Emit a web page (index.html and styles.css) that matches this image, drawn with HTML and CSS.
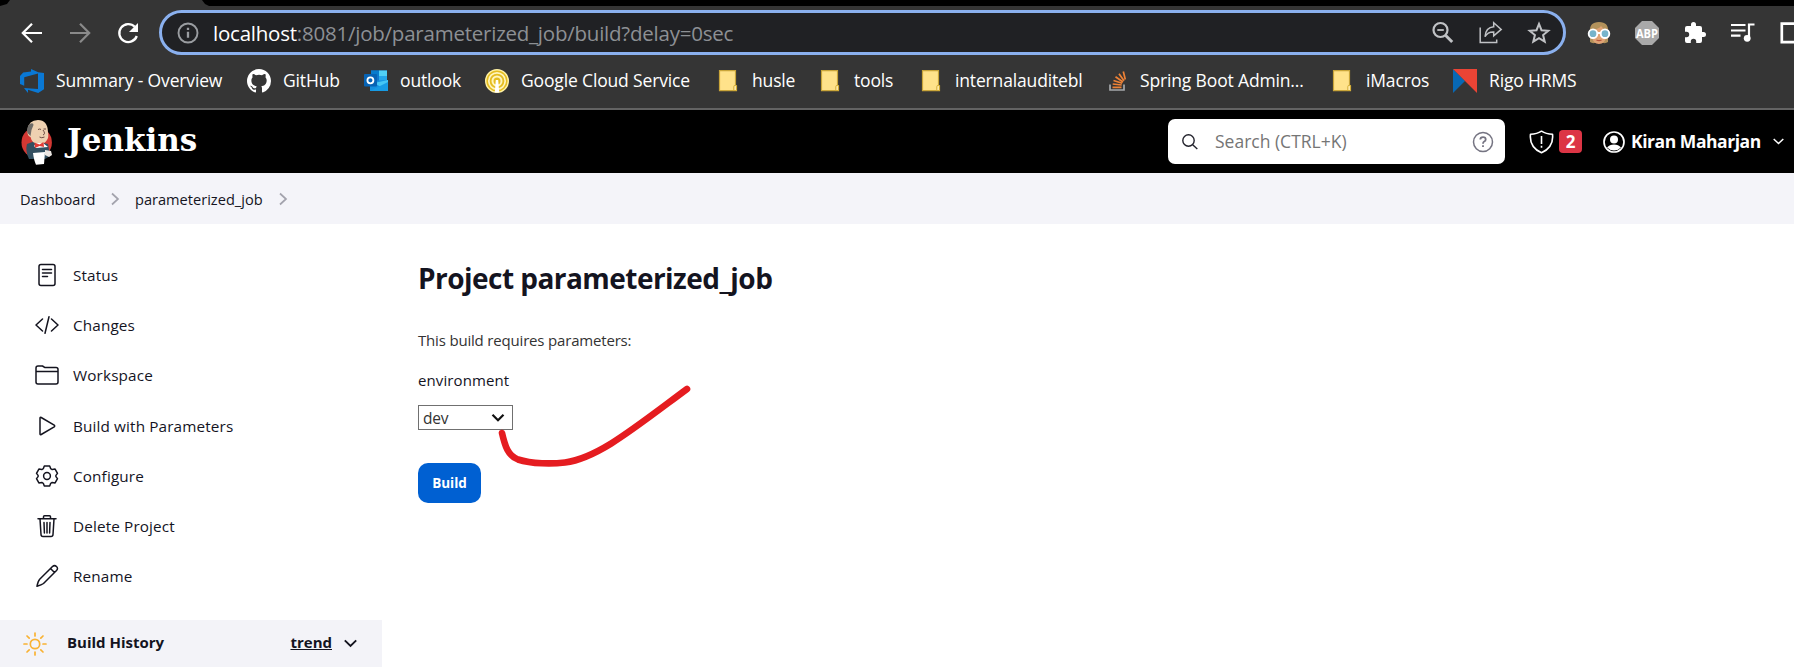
FILE: index.html
```
<!DOCTYPE html>
<html lang="en">
<head>
<meta charset="utf-8">
<title>parameterized_job [Jenkins]</title>
<link rel="stylesheet" href="styles.css">
</head>
<body>
<svg width="0" height="0" class="defs" aria-hidden="true">
  <symbol id="folder" viewBox="0 0 24 24"><path d="M3.500 1.700h16v14.500l1 .5v5h-17z" fill="#ffe28a" stroke="#c9a53a" stroke-width="1.200"/><path d="M17.800 21.500v-3.500q0-1.800 1.400-1.800 1.300 0 1.300 1.500v3.800z" fill="#ffe9a6" stroke="#d0a92f" stroke-width=".9"/></symbol>
  <symbol id="crumb" viewBox="0 0 10 14"><path d="M2 1.500L8 7l-6 5.500" fill="none" stroke="#a3a3ad" stroke-width="1.700"/></symbol>
</svg>

<div class="tabstrip"><div class="tab"></div></div>
<div class="toolbar">
  <div class="nav">
    <svg width="24" height="24" viewBox="0 0 24 24" fill="none" stroke="#fff" stroke-width="2.200"><path d="M22 12H3.500M12 2.700L2.800 12l9.200 9.300"/></svg>
    <svg width="24" height="24" viewBox="0 0 24 24" fill="none" stroke="#8a8a8a" stroke-width="2.200"><path d="M2 12h18.500M12 2.700l9.200 9.300L12 21.300"/></svg>
    <svg width="24" height="24" viewBox="0 0 24 24"><path d="M18.800 5.800A9 9 0 1 0 20.800 15" fill="none" stroke="#fff" stroke-width="2.300"/><path d="M22 2v9h-9z" fill="#fff"/></svg>
  </div>
  <div class="omnibox">
    <svg width="22" height="22" viewBox="0 0 22 22" fill="none" stroke="#9a9da1" stroke-width="1.900"><circle cx="11" cy="11" r="9.500"/><path d="M11 9.800v6M11 5.800v2.200" stroke-width="2.300"/></svg>
    <div class="url"><span class="host">localhost</span>:8081/job/parameterized_job/build?delay=0sec</div>
    <div class="omni-actions">
      <svg width="24" height="24" viewBox="0 0 24 24" fill="none" stroke="#c0c2c5"><circle cx="9.500" cy="9" r="7" stroke-width="2.200"/><path d="M6.300 9h6.500" stroke-width="1.800"/><path d="M14.700 14.500l6.500 6.500" stroke-width="3"/></svg>
      <svg width="24" height="24" viewBox="0 0 24 24" fill="none" stroke="#c0c2c5" stroke-width="1.500"><path d="M1.200 6.500v15h16.500v-3M14.700 1.700l7.500 6.700-7.500 6.400v-3.900c-4.500-.2-7 1.600-8.700 4.800.4-5.300 3-9.600 8.700-10z"/></svg>
      <svg width="24" height="24" viewBox="0 0 24 24" fill="none" stroke="#c0c2c5" stroke-width="2"><path d="M12 2.900l2.500 6.300 6.800.5-5.200 4.400 1.600 6.600-5.700-3.600-5.700 3.600 1.600-6.600-5.200-4.400 6.800-.5z"/></svg>
    </div>
  </div>
  <div class="extensions">
    <svg width="24" height="24" viewBox="0 0 24 24"><path d="M3 11Q2 1 12 1t9 10v10q-2 1.500-4.500 1h-9Q5 22.500 3 21z" fill="#b3925b"/><path d="M5 9q7-1 9-4 2 3 5 4v7q-1 7-7 7t-7-7z" fill="#e0a375"/><path d="M9.500 19q2.500 1.300 5 0" stroke="#b5543c" stroke-width="1.400" fill="none"/><g fill="#76b4cb" stroke="#fff" stroke-width="1.900"><circle cx="6" cy="12.700" r="4.300"/><circle cx="18" cy="12.700" r="4.300"/></g><path d="M10 12h4" stroke="#fff" stroke-width="2"/></svg>
    <svg width="24" height="24" viewBox="0 0 24 24"><path d="M7 0h10l7 7v10l-7 7H7l-7-7V7z" fill="#a9a9a9"/><text x="12" y="16.500" class="abp" textLength="22" lengthAdjust="spacingAndGlyphs">ABP</text></svg>
    <svg width="24" height="24" viewBox="0 0 24 24" fill="#fff"><path d="M20.500 11H19V7a2 2 0 0 0-2-2h-4V3.500a2.500 2.500 0 0 0-5 0V5H4a2 2 0 0 0-2 2v3.800h1.500a2.700 2.700 0 0 1 0 5.400H2V20a2 2 0 0 0 2 2h3.800v-1.500a2.700 2.700 0 0 1 5.400 0V22H17a2 2 0 0 0 2-2v-4h1.500a2.500 2.500 0 0 0 0-5z"/></svg>
    <svg width="24" height="24" viewBox="0 0 24 24" fill="none" stroke="#fff" stroke-width="2.200"><path d="M0 4h14.500M0 9.500h14.500M0 14.700h9.500M18 17V3.500h5.500" /><circle cx="16.200" cy="17.300" r="3.400" fill="#fff" stroke="none"/></svg>
    <svg width="24" height="24" viewBox="0 0 24 24" fill="none" stroke="#fff" stroke-width="2.700"><path d="M2.800 2.600h21v18.500h-21z"/></svg>
  </div>
</div>

<div class="bookmarks">
  <div class="bm"><svg width="24" height="24" viewBox="0 0 24 24"><path d="M24 4v16.200L18.200 24 8 20.700V24l-4-5 14 1V4.600L4.200 8.300v8.500L0 15V7l3.200-3.400L11 2.500V0l7.200 3.300z" fill="#0a78d4"/></svg><span>Summary - Overview</span></div>
  <div class="bm"><svg width="24" height="24" viewBox="0 0 16 16" fill="#fff"><path d="M8 0C3.580 0 0 3.580 0 8c0 3.540 2.290 6.530 5.470 7.590.4.070.55-.17.55-.38 0-.19-.01-.82-.01-1.490-2.010.37-2.530-.49-2.690-.94-.09-.23-.48-.94-.82-1.130-.28-.15-.68-.52-.01-.53.63-.01 1.080.58 1.230.82.72 1.210 1.870.87 2.330.66.070-.52.28-.87.51-1.070-1.780-.2-3.640-.89-3.640-3.950 0-.87.31-1.590.82-2.150-.08-.2-.36-1.020.08-2.120 0 0 .67-.21 2.200.82a7.600 7.600 0 0 1 4 0c1.530-1.040 2.200-.82 2.200-.82.44 1.100.16 1.920.08 2.120.51.56.82 1.270.82 2.150 0 3.070-1.870 3.750-3.650 3.950.29.25.54.73.54 1.480 0 1.070-.01 1.930-.01 2.200 0 .21.15.46.55.38A8 8 0 0 0 16 8c0-4.420-3.580-8-8-8z"/></svg><span>GitHub</span></div>
  <div class="bm"><svg width="24" height="24" viewBox="0 0 24 24"><path d="M7 1.500h16V14H7z" fill="#1177cc"/><path d="M15 1.500h8V7h-8z" fill="#50d0f5"/><path d="M7 1.500h8V7H7z" fill="#087bcc"/><path d="M15 7h8v6h-8z" fill="#24a6ea"/><path d="M6 12l18-1v11H6z" fill="#1490df"/><path d="M24 11v11L10 14z" fill="#45c6f4"/><path d="M6 22l18-9v9z" fill="#179be4"/><rect y="5" width="13" height="12.500" rx="1" fill="#0763b4"/><circle cx="6.400" cy="11.300" r="3" fill="none" stroke="#fff" stroke-width="1.800"/></svg><span>outlook</span></div>
  <div class="bm"><svg width="24" height="24" viewBox="0 0 24 24"><circle cx="12" cy="12" r="11.300" fill="#e5bd20" stroke="#fff1a4" stroke-width="1.400"/><g fill="none" stroke="#fff5bd"><circle cx="12" cy="12" r="8.200" stroke-width="1.700"/><circle cx="12" cy="12" r="4.500" stroke-width="2"/></g><path d="M10.800 11h2.400l1 12.500H9.800z" fill="#fff"/></svg><span>Google Cloud Service</span></div>
  <div class="bm"><svg width="24" height="24"><use href="#folder"/></svg><span>husle</span></div>
  <div class="bm"><svg width="24" height="24"><use href="#folder"/></svg><span>tools</span></div>
  <div class="bm"><svg width="24" height="24"><use href="#folder"/></svg><span>internalauditebl</span></div>
  <div class="bm"><svg width="24" height="24" viewBox="0 0 24 24" fill="none"><path d="M6 15.500v5.500h14v-5.500" stroke="#a5a8aa" stroke-width="1.700"/><path d="M8.500 18.300h9M8.700 15l9 1M9.500 11.500l8.700 2.800M11.500 7.800l7.500 5.200M15 4.700l5 7M19.300 2.500l2 8" stroke="#ee8236" stroke-width="1.700"/></svg><span>Spring Boot Admin...</span></div>
  <div class="bm"><svg width="24" height="24"><use href="#folder"/></svg><span>iMacros</span></div>
  <div class="bm"><svg width="24" height="24" viewBox="0 0 24 24"><path d="M0 0v24l12-12z" fill="#0868b4"/><path d="M0 0h24v24z" fill="#ea4435"/></svg><span>Rigo HRMS</span></div>
</div>

<header class="header">
  <div class="brand">
    <svg width="32" height="46" viewBox="0 0 32 46"><ellipse cx="15.700" cy="23.500" rx="15.200" ry="15.500" fill="#d33833"/><path d="M6 25l8-3 13 3 2 12-5 3H8Q4 32 6 25z" fill="#335061"/><path d="M6.500 11Q7.500 1 17 1t10 12q1 5-1 8-3 5-8.500 4Q11 25 9.500 18 6 17 6.500 11z" fill="#eed1b1"/><path d="M8.500 5Q5 9 6.500 14l3 3 1-6 2-5q0-3-4-1z" fill="#6f6c68"/><path d="M15 24l-2 3 2 2 12-1-5-4z" fill="#fff"/><path d="M13.500 23.500l5 2 4-2.500.5 5-4.500-1-4.500 2z" fill="#e33c35"/><path d="M12 34l12-1-1 12-8 .7q-2-4-3-11.700z" fill="#fff"/><path d="M24 31l6 1 1 4-3 2-4-2z" fill="#ebe6e2"/><path d="M18.500 18q2 1.500 5 0M17 10.500q2-1 3 0M22.500 10h2.500M22 11q3 4 0 5" fill="none" stroke="#6d4b42"/></svg>
    <span class="wordmark">Jenkins</span>
  </div>
  <div class="search">
    <svg width="16" height="16" viewBox="0 0 16 16" fill="none" stroke="#22222c" stroke-width="1.400"><circle cx="6.500" cy="6.500" r="5.700"/><path d="M10.700 10.700l4.600 4.400"/></svg>
    <span class="placeholder">Search (CTRL+K)</span>
    <svg width="22" height="22" viewBox="0 0 22 22" fill="none" stroke="#757482" stroke-width="1.500"><circle cx="11" cy="11" r="9.500"/><path d="M8.300 8.600q0-2.500 2.700-2.500t2.700 2.300q0 1.300-1.500 2.100-1.200.7-1.200 2.200M11 14.200v1.900" stroke-width="1.800"/></svg>
  </div>
  <div class="alerts">
    <svg width="25" height="24" viewBox="0 0 25 24" fill="none" stroke="#fff" stroke-width="1.600"><path d="M12.500 1.200Q8 4.200 1.500 4.200 0 17 12.500 22.800 25 17 23.500 4.200 17 4.200 12.500 1.200z" stroke-linejoin="round"/><path d="M12.500 6v8M12.500 15.700v2"/></svg>
    <span class="badge">2</span>
  </div>
  <div class="user">
    <svg width="22" height="22" viewBox="0 0 22 22"><circle cx="11" cy="11" r="10" fill="none" stroke="#fff" stroke-width="1.700"/><circle cx="11" cy="8.500" r="4" fill="#fff"/><path d="M4 16.500Q6.500 13.500 11 13.500t7 3Q15 19.500 11 19.500T4 16.500z" fill="#fff"/></svg>
    <span class="username">Kiran Maharjan</span>
    <svg width="11" height="7" viewBox="0 0 11 7" fill="none" stroke="#fff" stroke-width="1.500"><path d="M.7 1l4.800 4.500L10.300 1"/></svg>
  </div>
</header>

<nav class="breadcrumbs">
  <span class="crumb-home">Dashboard</span><svg width="10" height="14"><use href="#crumb"/></svg>
  <span class="crumb-job">parameterized_job</span><svg width="10" height="14"><use href="#crumb"/></svg>
</nav>

<div class="page">
  <aside class="side">
    <div class="tasks">
      <div class="task"><svg width="24" height="24" viewBox="0 0 24 24"><rect x="4" y="1.500" width="16" height="21" rx="2"/><path d="M7.500 6.500h9M7.500 10h9M7.500 13.500h5"/></svg><span>Status</span></div>
      <div class="task"><svg width="24" height="24" viewBox="0 0 24 24"><path d="M7.500 6L1 12l6.500 6M16.500 6l6.500 6-6.500 6M14 3.800L10 20.200"/></svg><span>Changes</span></div>
      <div class="task"><svg width="24" height="24" viewBox="0 0 24 24"><path d="M1 19V5q0-2 2-2h4.500l2.500 1.600h11q2 0 2 2V19q0 2-2 2H3q-2 0-2-2zM1 8.500h22"/></svg><span>Workspace</span></div>
      <div class="task"><svg width="24" height="24" viewBox="0 0 24 24"><path d="M5 4.200v15.600q0 1.400 1.200.7l13-7.700q1-.8 0-1.600l-13-7.700Q5 2.800 5 4.200z"/></svg><span>Build with Parameters</span></div>
      <div class="task"><svg width="24" height="24" viewBox="0 0 24 24"><path d="M9.300 2h5.400l1 2.700 1.500.9 2.900-.5 2.400 4.300-1.600 2v1.200l1.600 2-2.400 4.300-2.900-.5-1.500.9-1 2.700H9.300l-1-2.700-1.500-.9-2.900.5-2.400-4.300 1.600-2v-1.200l-1.600-2 2.400-4.300 2.900.5 1.500-.9z"/><circle cx="12" cy="12" r="3.400"/></svg><span>Configure</span></div>
      <div class="task"><svg width="24" height="24" viewBox="0 0 24 24"><path d="M3 4.800h18M8.500 4.500V2.800q0-1 1-1h5q1 0 1 1v1.700M5 5l1 15.500q.1 2 2 2h8q1.900 0 2-2L19 5M9 8.500l.4 10.500M12 8.500V19M15 8.500L14.600 19"/></svg><span>Delete Project</span></div>
      <div class="task"><svg width="24" height="24" viewBox="0 0 24 24"><path d="M17.500 2.500q2-1.800 4 0t0 4L8.500 19.500Q6.500 21 2 22.200 3 17 4.700 15.200zM15.500 4.500l4 4"/></svg><span>Rename</span></div>
    </div>
    <div class="history">
      <svg width="24" height="24" viewBox="0 0 24 24" fill="none" stroke="#f9b233" stroke-width="1.700" stroke-linecap="round"><circle cx="12" cy="12" r="4.700"/><path d="M12 1v3M12 20v3M1 12h3M20 12h3M4 4l2.200 2.200M17.800 17.800L20 20M4 20l2.200-2.200M17.800 6.200L20 4"/></svg>
      <span class="history-title">Build History</span>
      <span class="trend">trend</span>
      <svg width="13" height="9" viewBox="0 0 13 9" fill="none" stroke="#14141f" stroke-width="1.900"><path d="M.8 1.300l5.700 5.700 5.700-5.700"/></svg>
    </div>
  </aside>
  <main class="main">
    <h1>Project parameterized_job</h1>
    <p class="intro">This build requires parameters:</p>
    <div class="label">environment</div>
    <div class="select"><span>dev</span><svg width="14" height="10" viewBox="0 0 14 10" fill="none" stroke="#111" stroke-width="2.200"><path d="M1.500 1.800L7 7.300l5.500-5.500"/></svg></div>
    <button class="build">Build</button>
    <svg class="scribble" width="200" height="90" viewBox="495 382 200 90" fill="none" stroke="#e51c20" stroke-width="6.600" stroke-linecap="round" stroke-linejoin="round"><path d="M502 433C505 446 508 456 518 459.500C532 464 552 464 565 462.500C598 458 633 429 687 389"/></svg>
  </main>
</div>
</body>
</html>
```

FILE: styles.css
```
* { box-sizing: border-box; }
body {
  margin: 0;
  width: 1794px;
  height: 670px;
  overflow: hidden;
  background: #fff;
  color: #14141f;
  font-family: "Open Sans", "Noto Sans", sans-serif;
}
svg { display: block; flex: none; }
.defs { position: absolute; }
span, .url, .label, .intro, h1 { white-space: nowrap; }

.tabstrip { height: 6px; background: #000; }
.tab { width: 209px; height: 6px; background: #353535; clip-path: polygon(10px 0, 202px 0, 205px 4px, 209px 6px, 0 6px, 7px 4px); }

.toolbar { height: 53px; background: #353535; display: flex; align-items: flex-start; padding: 4px 0 0 20px; }
.nav { width: 139px; flex: none; display: flex; gap: 24px; padding-top: 11px; }
.omnibox {
  width: 1407px; height: 45px; border: 3px solid #8ab0ee; border-radius: 23px; background: #202124;
  display: flex; align-items: center; padding: 0 12px 0 15px; flex: none;
}
.url { margin-left: 14px; flex: 1; font-size: 20.500px; line-height: 30px; color: #8d9094; letter-spacing: -0.230px; }
.host { color: #fff; }
.omni-actions { display: flex; gap: 24px; }
.extensions { display: flex; gap: 24px; padding: 11px 0 0 21px; }
.abp { font-size: 12px; font-weight: 700; fill: #fff; text-anchor: middle; }

.bookmarks {
  height: 51px; background: #353535; border-bottom: 2px solid #636363; padding: 10px 0 0 20px;
  display: grid; grid-template-columns: 227px 117px 121px 231px 102px 101px 185px 226px 123px auto; align-items: start;
}
.bm { display: flex; align-items: center; gap: 12px; height: 24px; color: #fff; font-size: 17.500px; letter-spacing: -0.150px; }
.bm span { margin-top: -2px; }

.header { height: 63px; background: #000; color: #fff; display: flex; align-items: center; }
.brand { display: flex; align-items: center; width: 1168px; padding-left: 21px; gap: 14px; }
.wordmark { font: 700 31px/40px "DejaVu Serif", serif; margin-top: -4px; }
.search { width: 337px; height: 45px; border-radius: 7px; background: #fff; display: flex; align-items: center; padding: 0 11px 0 14px; }
.placeholder { flex: 1; margin: -1px 0 0 17px; color: #757575; font-size: 17.500px; }
.alerts { display: flex; align-items: center; gap: 5px; margin-left: 24px; }
.badge { width: 23px; height: 23px; border-radius: 4px; background: #dc3545; font: 700 17px/23px "Open Sans", sans-serif; text-align: center; }
.user { display: flex; align-items: center; margin-left: 21px; }
.username { width: 130px; margin: -2px 12px 0 6px; font-size: 17.500px; font-weight: 700; letter-spacing: -0.450px; }

.breadcrumbs { height: 51px; background: #f4f4f9; display: flex; align-items: center; padding-left: 20px; font-size: 14.600px; }
.crumb-home { width: 90px; }
.crumb-job { width: 143px; margin-left: 15px; }

.page { display: flex; height: 446px; }
.side { width: 382px; }
.tasks { padding: 26px 0 0 35px; height: 396px; }
.task { display: flex; align-items: center; gap: 14px; height: 50.200px; font-size: 15.300px; font-weight: 500; letter-spacing: 0.130px; }
.task svg { fill: none; stroke: #14141f; stroke-width: 1.500; stroke-linejoin: round; stroke-linecap: round; }
.history { height: 47px; background: #f3f3f8; display: flex; align-items: center; padding: 0 25px 0 23px; font-size: 15px; font-weight: 700; }
.history-title { flex: 1; margin: -3px 0 0 20px; }
.trend { text-decoration: underline; margin: -3px 12px 0 0; }

.main { position: relative; flex: 1; padding: 34px 0 0 36px; }
h1 { margin: 0; font-size: 28px; line-height: 40px; font-weight: 700; letter-spacing: -0.540px; }
.intro { margin: 31px 0 0; font-size: 15px; line-height: 22px; color: #333; letter-spacing: -0.180px; }
.label { margin-top: 18px; font-size: 15px; line-height: 22px; font-weight: 500; letter-spacing: 0.100px; }
.select { width: 95px; height: 25px; margin-top: 14px; border: 1px solid #707070; display: flex; align-items: center; justify-content: space-between; padding: 0 7px 0 4px; font-size: 15.500px; letter-spacing: -0.200px; color: #333; }
.build { display: block; width: 63px; height: 40px; margin-top: 33px; border: 0; border-radius: 10px; background: #0060d2; color: #fff; font: 700 13.500px/41px "Open Sans", sans-serif; padding: 0; }
.scribble { position: absolute; left: 113px; top: 158px; }
```
